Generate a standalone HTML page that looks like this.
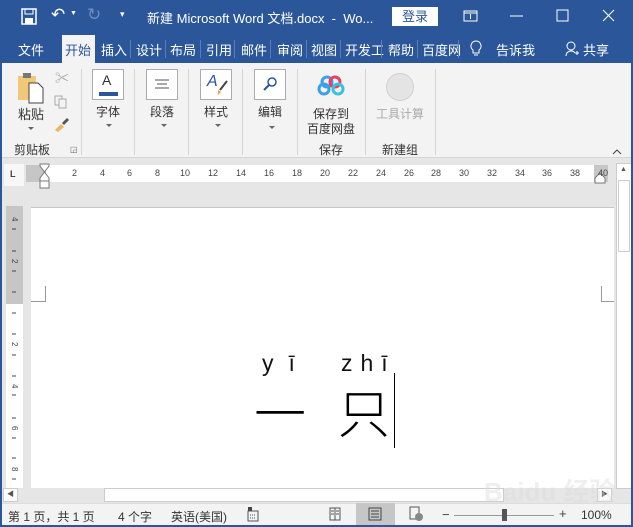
<!DOCTYPE html>
<html><head><meta charset="utf-8"><style>
*{margin:0;padding:0;box-sizing:border-box}
body{width:633px;height:527px;overflow:hidden;position:relative;background:#e6e6e6;font-family:"Liberation Sans","Noto Sans CJK SC",sans-serif;font-size:12px;color:#222}
.a{position:absolute;white-space:nowrap}
.w{color:#fff}
.tab{position:absolute;top:40px;color:#fff;font-size:13px}
.sep{position:absolute;top:40px;width:1px;height:18px;background:#5a7db5}
.btn{position:absolute;top:69px;width:32px;height:31px;border:1px solid #ababab;background:#fff}
.lab{position:absolute;font-size:12px;color:#333}
.vs{position:absolute;top:69px;width:1px;height:86px;background:#d5d5d5}
.dd{position:absolute;width:0;height:0;border-left:3px solid transparent;border-right:3px solid transparent;border-top:3px solid #666}
.rn{position:absolute;top:168px;font-size:9px;color:#444}
</style></head><body>
<!-- title bar -->
<div class="a" style="left:0;top:0;width:633px;height:63px;background:#2b579a"></div>
<svg class="a" style="left:21px;top:8px" width="16" height="17"><rect x="1" y="1" width="14" height="15" fill="none" stroke="#fff" stroke-width="1.5"/><rect x="4" y="1" width="8" height="5" fill="none" stroke="#fff"/><rect x="4" y="10" width="8" height="6" fill="#fff"/></svg>
<div class="a w" style="left:51px;top:5px;font-size:17px">↶</div>
<div class="a w" style="left:70px;top:10px;font-size:7px">▼</div>
<div class="a" style="left:87px;top:5px;font-size:17px;color:#6f8cbd">↻</div>
<div class="a w" style="left:120px;top:9px;font-size:9px">▾</div>
<div class="a w" style="left:147px;top:8px;font-size:13px">新建 Microsoft Word 文档.docx&nbsp; - &nbsp;Wo...</div>
<div class="a" style="left:392px;top:7px;width:46px;height:19px;background:#fff;color:#2b579a;font-size:13px;text-align:center;line-height:19px">登录</div>
<svg class="a" style="left:383px;top:0" width="250" height="33"><rect x="81" y="11" width="13" height="10" fill="none" stroke="#fff"/><line x1="81" y1="13" x2="94" y2="13" stroke="#fff"/><line x1="87.5" y1="14" x2="87.5" y2="19" stroke="#fff"/><line x1="127" y1="16" x2="140" y2="16" stroke="#fff"/><rect x="174" y="10" width="11" height="11" fill="none" stroke="#fff"/><path d="M220 10L231 21M231 10L220 21" stroke="#fff"/></svg>
<!-- tabs -->
<div class="tab" style="left:18px">文件</div>
<div class="a" style="left:62px;top:35px;width:33px;height:28px;background:#f3f3f3"></div>
<div class="tab" style="left:65px;color:#2b579a">开始</div>
<div class="tab" style="left:101px">插入</div><div class="sep" style="left:130px"></div>
<div class="tab" style="left:136px">设计</div><div class="sep" style="left:165px"></div>
<div class="tab" style="left:170px">布局</div><div class="sep" style="left:200px"></div>
<div class="tab" style="left:206px">引用</div><div class="sep" style="left:234px"></div>
<div class="tab" style="left:241px">邮件</div><div class="sep" style="left:270px"></div>
<div class="tab" style="left:277px">审阅</div><div class="sep" style="left:306px"></div>
<div class="tab" style="left:311px">视图</div><div class="sep" style="left:340px"></div>
<div class="tab" style="left:345px">开发工</div><div class="sep" style="left:381px"></div>
<div class="tab" style="left:388px">帮助</div><div class="sep" style="left:417px"></div>
<div class="tab" style="left:422px">百度网</div><div class="sep" style="left:458px"></div>
<svg class="a" style="left:470px;top:40px" width="12" height="18"><path d="M6 1a5 5 0 0 0-3 9v3h6v-3a5 5 0 0 0-3-9zM4 15h4" fill="none" stroke="#fff"/></svg>
<div class="tab" style="left:496px">告诉我</div>
<svg class="a" style="left:565px;top:40px" width="14" height="18"><circle cx="6" cy="6" r="4" fill="none" stroke="#fff"/><path d="M1 16a5 5 0 0 1 9-3M10 13h4M12 11v4" fill="none" stroke="#fff"/></svg>
<div class="tab" style="left:583px">共享</div>
<!-- ribbon -->
<div class="a" style="left:0;top:63px;width:633px;height:95px;background:#f3f3f3;border-bottom:1px solid #d5d5d5"></div>
<svg class="a" style="left:16px;top:70px" width="30" height="34"><rect x="2" y="6" width="18" height="24" fill="#f0c878"/><rect x="7" y="3" width="8" height="5" fill="#777"/><path d="M13 13h9l5 5v15H13z" fill="#fff" stroke="#444"/></svg>
<div class="lab" style="left:18px;top:104px;font-size:13px">粘贴</div>
<div class="dd" style="left:28px;top:127px"></div>
<div class="a" style="left:55px;top:68px;font-size:14px;color:#aaa">✂</div>
<svg class="a" style="left:53px;top:94px" width="16" height="16"><rect x="2" y="2" width="7" height="9" fill="none" stroke="#aaa"/><rect x="6" y="5" width="7" height="9" fill="#f3f3f3" stroke="#aaa"/></svg>
<svg class="a" style="left:53px;top:116px" width="18" height="16"><path d="M2 14l6-6 3 3-6 5z" fill="#e8b860"/><path d="M9 7l5-5 2 2-5 5z" fill="#555"/></svg>
<div class="lab" style="left:14px;top:141px">剪贴板</div>
<div class="a" style="left:70px;top:145px;font-size:8px;color:#666">◲</div>
<div class="vs" style="left:81px"></div>
<div class="btn" style="left:92px"><div class="a" style="left:9px;top:2px;font-size:14px;color:#333">A</div><div class="a" style="left:6px;top:22px;width:19px;height:4px;background:#2b579a"></div></div>
<div class="lab" style="left:96px;top:103px">字体</div><div class="dd" style="left:106px;top:124px"></div>
<div class="vs" style="left:134px"></div>
<div class="btn" style="left:146px"><svg width="30" height="29"><path d="M8 10h14M10 14h10M8 18h14" stroke="#555"/></svg></div>
<div class="lab" style="left:150px;top:103px">段落</div><div class="dd" style="left:161px;top:124px"></div>
<div class="vs" style="left:188px"></div>
<div class="btn" style="left:200px"><div class="a" style="left:6px;top:3px;font-size:16px;color:#2b579a;font-style:italic">A</div><svg class="a" style="left:14px;top:10px" width="14" height="16"><path d="M12 1L5 10" stroke="#444" stroke-width="2"/><path d="M3 10l3 2-3 3z" fill="#e8a040"/></svg></div>
<div class="lab" style="left:204px;top:103px">样式</div><div class="dd" style="left:215px;top:124px"></div>
<div class="vs" style="left:242px"></div>
<div class="btn" style="left:254px"><svg width="30" height="29"><circle cx="17" cy="12" r="4" fill="none" stroke="#2b579a" stroke-width="1.5"/><path d="M14 15l-5 5" stroke="#2b579a" stroke-width="2"/></svg></div>
<div class="lab" style="left:258px;top:103px">编辑</div><div class="dd" style="left:269px;top:126px"></div>
<div class="vs" style="left:297px"></div>
<svg class="a" style="left:316px;top:74px" width="30" height="24"><circle cx="11" cy="8" r="5" fill="none" stroke="#3aa0e8" stroke-width="3"/><circle cx="19" cy="8" r="5" fill="none" stroke="#e84060" stroke-width="3"/><circle cx="8" cy="15" r="5" fill="none" stroke="#3aa0e8" stroke-width="3"/><circle cx="22" cy="15" r="5" fill="none" stroke="#3ac0e0" stroke-width="3"/></svg>
<div class="lab" style="left:313px;top:105px">保存到</div>
<div class="lab" style="left:307px;top:120px">百度网盘</div>
<div class="lab" style="left:319px;top:141px">保存</div>
<div class="vs" style="left:365px"></div>
<div class="a" style="left:386px;top:73px;width:28px;height:28px;border-radius:50%;background:#e4e4e4;border:1px solid #d0d0d0"></div>
<div class="lab" style="left:376px;top:105px;color:#aaa">工具计算</div>
<div class="lab" style="left:382px;top:141px">新建组</div>
<div class="vs" style="left:435px"></div>
<svg class="a" style="left:612px;top:149px" width="10" height="6"><path d="M1 5l4-4 4 4" fill="none" stroke="#444"/></svg>
<!-- ruler -->
<div class="a" style="left:4px;top:164px;width:20px;height:22px;background:#f7f7f7"></div>
<div class="a" style="left:10px;top:169px;font-size:9px;color:#444;font-weight:bold">L</div>
<div class="a" style="left:26px;top:165px;width:582px;height:17px;background:#fff"></div>
<div class="a" style="left:26px;top:165px;width:20px;height:17px;background:#c6c6c6"></div>
<div class="a" style="left:594px;top:165px;width:14px;height:17px;background:#c6c6c6"></div>
<svg class="a" style="left:38px;top:163px" width="14" height="34"><path d="M2 1h9v2l-4.5 6L2 3zM6.5 9L2 15v3h9v-3z M2 18h9v7H2z" fill="#fff" stroke="#777"/></svg>
<svg class="a" style="left:594px;top:172px" width="12" height="12"><path d="M1 11V6l5-5 5 5v5z" fill="#fff" stroke="#777"/></svg>
<div class="rn" style="left:72px">2</div><div class="rn" style="left:100px">4</div><div class="rn" style="left:127px">6</div><div class="rn" style="left:155px">8</div><div class="rn" style="left:180px">10</div><div class="rn" style="left:208px">12</div><div class="rn" style="left:236px">14</div><div class="rn" style="left:264px">16</div><div class="rn" style="left:292px">18</div><div class="rn" style="left:320px">20</div><div class="rn" style="left:348px">22</div><div class="rn" style="left:376px">24</div><div class="rn" style="left:404px">26</div><div class="rn" style="left:431px">28</div><div class="rn" style="left:459px">30</div><div class="rn" style="left:487px">32</div><div class="rn" style="left:515px">34</div><div class="rn" style="left:542px">36</div><div class="rn" style="left:570px">38</div><div class="rn" style="left:598px">40</div>
<!-- vertical ruler -->
<div class="a" style="left:6px;top:206px;width:17px;height:282px;background:#fff"></div>
<div class="a" style="left:6px;top:206px;width:17px;height:98px;background:#c6c6c6"></div>
<svg class="a" style="left:6px;top:206px" width="17" height="282" font-size="8" fill="#444" font-family="Liberation Sans"><g stroke="#444"><path d="M6 23h4M6 45h4M6 65h4M6 86h4M6 107h4M6 128h4M6 149h4M6 170h4M6 189h4M6 212h4M6 232h4M6 252h4M6 273h4"/></g>
<text x="5" y="16" transform="rotate(90 8 14)">4</text><text x="5" y="58" transform="rotate(90 8 56)">2</text><text x="5" y="141" transform="rotate(90 8 139)">2</text><text x="5" y="183" transform="rotate(90 8 181)">4</text><text x="5" y="225" transform="rotate(90 8 223)">6</text><text x="5" y="266" transform="rotate(90 8 264)">8</text></svg>
<!-- page -->
<div class="a" style="left:31px;top:207px;width:583px;height:281px;background:#fff"></div>
<div class="a" style="left:31px;top:207px;width:583px;height:1px;background:#c6c6c6"></div>
<div class="a" style="left:31px;top:286px;width:15px;height:16px;border-right:1px solid #999;border-bottom:1px solid #999"></div>
<div class="a" style="left:601px;top:286px;width:13px;height:16px;border-left:1px solid #999;border-bottom:1px solid #999"></div>
<div class="a" style="left:262px;top:350px;font-size:23px;color:#111;letter-spacing:15px">yī</div>
<div class="a" style="left:341px;top:350px;font-size:23px;color:#111;letter-spacing:8px">zhī</div>
<div class="a" style="left:254px;top:381px;font-size:52px;line-height:60px;color:#000;font-family:'Noto Sans CJK SC',sans-serif;font-weight:300">一</div>
<div class="a" style="left:338px;top:381px;font-size:52px;line-height:60px;color:#000;font-family:'Noto Sans CJK SC',sans-serif;font-weight:300">只</div>
<div class="a" style="left:394px;top:373px;width:1px;height:75px;background:#000"></div>
<!-- vertical scrollbar -->
<div class="a" style="left:616px;top:163px;width:16px;height:326px;background:#fff;border:1px solid #ccc"></div>
<div class="a" style="left:620px;top:166px;font-size:7px;color:#555">▲</div>
<div class="a" style="left:618px;top:180px;width:12px;height:72px;background:#fff;border:1px solid #ccc"></div>
<!-- horizontal scrollbar -->
<div class="a" style="left:3px;top:488px;width:611px;height:15px;background:#e6e6e6"></div>
<div class="a" style="left:3px;top:488px;width:15px;height:14px;background:#fff;border:1px solid #ccc;font-size:7px;line-height:12px;text-align:center;color:#555">◀</div>
<div class="a" style="left:104px;top:488px;width:400px;height:14px;background:#fff;border:1px solid #ccc"></div>
<div class="a" style="left:597px;top:488px;width:15px;height:14px;background:#fff;border:1px solid #ccc;font-size:7px;line-height:12px;text-align:center;color:#555">▶</div>
<div class="a" style="left:484px;top:472px;font-size:26px;font-weight:bold;color:rgba(220,220,220,0.45)">Baidu 经验</div>
<!-- status bar -->
<div class="a" style="left:0;top:503px;width:633px;height:24px;background:#f3f3f3;border-top:1px solid #ddd"></div>
<div class="a" style="left:8px;top:508px;font-size:12px;color:#333">第 1 页，共 1 页</div>
<div class="a" style="left:118px;top:508px;font-size:12px;color:#333">4 个字</div>
<div class="a" style="left:171px;top:508px;font-size:12px;color:#333">英语(美国)</div>
<svg class="a" style="left:246px;top:506px" width="14" height="16"><rect x="2" y="1" width="4" height="4" fill="#444"/><rect x="2" y="5" width="10" height="10" fill="none" stroke="#555"/><path d="M4 9h6M4 12h6" stroke="#555" stroke-dasharray="1 1"/></svg>
<svg class="a" style="left:328px;top:507px" width="14" height="14"><rect x="2" y="1" width="10" height="12" fill="none" stroke="#555"/><path d="M7 1v12M3 4h3M3 7h3M8 4h3M8 7h3" stroke="#555"/></svg>
<div class="a" style="left:356px;top:503px;width:39px;height:24px;background:#c6c6c6"></div>
<svg class="a" style="left:368px;top:507px" width="14" height="14"><rect x="1" y="1" width="12" height="12" fill="none" stroke="#444"/><path d="M3 4h8M3 7h8M3 10h8" stroke="#444"/></svg>
<svg class="a" style="left:408px;top:506px" width="16" height="16"><rect x="2" y="1" width="9" height="12" fill="none" stroke="#555"/><circle cx="11" cy="11" r="4" fill="#888"/></svg>
<div class="a" style="left:442px;top:507px;font-size:13px;color:#444">−</div>
<div class="a" style="left:454px;top:515px;width:100px;height:1px;background:#999"></div>
<div class="a" style="left:502px;top:509px;width:5px;height:12px;background:#555"></div>
<div class="a" style="left:559px;top:506px;font-size:13px;color:#444">+</div>
<div class="a" style="left:581px;top:508px;font-size:12px;color:#333">100%</div>
<div class="a" style="left:0;top:33px;width:2px;height:494px;background:#2b579a"></div>
<div class="a" style="left:631px;top:33px;width:2px;height:494px;background:#2b579a"></div>
<div class="a" style="left:0;top:525px;width:633px;height:2px;background:#2b579a"></div>
</body></html>
